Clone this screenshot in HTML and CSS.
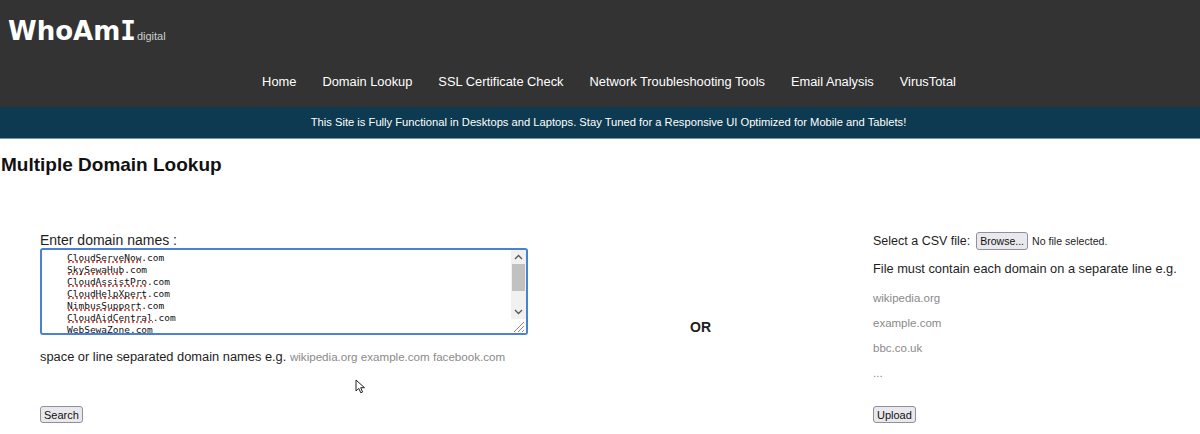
FILE: index.html
```html
<!DOCTYPE html>
<html lang="en">
<head>
  <meta charset="UTF-8" />
  <meta name="viewport" content="width=device-width, initial-scale=1.0"/>
  <title>WhoAmI digital - Multiple Domain Lookup</title>
  <link rel="stylesheet" href="styles.css">
</head>
<body>

<header class="site-header">
  <div class="logo">WhoAm<span class="logo-i">I</span><span class="logo-sub">digital</span></div>
  <nav class="nav">
    <a href="#">Home</a>
    <a href="#">Domain Lookup</a>
    <a href="#">SSL Certificate Check</a>
    <a href="#">Network Troubleshooting Tools</a>
    <a href="#">Email Analysis</a>
    <a href="#">VirusTotal</a>
  </nav>
</header>

<div class="banner">This Site is Fully Functional in Desktops and Laptops. Stay Tuned for a Responsive UI Optimized for Mobile and Tablets!</div>

<h1 class="page-title">Multiple Domain Lookup</h1>

<main class="lookup">
  <section class="col-left">
    <label class="field-label">Enter domain names :</label>
    <div class="textarea">
      <div class="textarea-text">
        <div class="line"><span class="typo">CloudServeNow</span>.com</div>
        <div class="line"><span class="typo">SkySewaHub</span>.com</div>
        <div class="line"><span class="typo">CloudAssistPro</span>.com</div>
        <div class="line"><span class="typo">CloudHelpXpert</span>.com</div>
        <div class="line"><span class="typo">NimbusSupport</span>.com</div>
        <div class="line"><span class="typo">CloudAidCentral</span>.com</div>
        <div class="line"><span class="typo">WebSewaZone</span>.com</div>
      </div>
      <div class="scrollbar">
        <svg class="arrow" width="15" height="14" viewBox="0 0 15 14"><path d="M4 9 L7.5 5.5 L11 9" fill="none" stroke="#555" stroke-width="1.3"/></svg>
        <div class="track"><div class="thumb"></div></div>
        <svg class="arrow" width="15" height="14" viewBox="0 0 15 14"><path d="M4 5 L7.5 8.5 L11 5" fill="none" stroke="#555" stroke-width="1.3"/></svg>
        <svg class="grip" width="15" height="14" viewBox="0 0 15 14"><path d="M13 3 L3 13 M13 7 L7 13 M13 11 L11 13" stroke="#888" stroke-width="1"/></svg>
      </div>
    </div>
    <p class="hint">space or line separated domain names e.g. <span class="muted">wikipedia.org example.com facebook.com</span></p>
    <button class="btn">Search</button>
    <svg class="cursor" width="11" height="15" viewBox="0 0 11 15"><path d="M1 1 L1 12 L3.8 9.4 L5.8 13.8 L7.6 13 L5.7 8.7 L9.5 8.7 Z" fill="#fff" stroke="#222" stroke-width="1"/></svg>
  </section>

  <section class="col-mid">
    <div class="or">OR</div>
  </section>

  <section class="col-right">
    <div class="file-row">
      <span>Select a CSV file:</span>
      <button class="btn btn-small">Browse...</button>
      <span class="file-name">No file selected.</span>
    </div>
    <p class="file-note">File must contain each domain on a separate line e.g.</p>
    <p class="example first">wikipedia.org</p>
    <p class="example">example.com</p>
    <p class="example">bbc.co.uk</p>
    <p class="example">...</p>
    <button class="btn btn-upload">Upload</button>
  </section>
</main>

</body>
</html>
```

FILE: styles.css
```css
body {
  margin: 0;
  font-family: 'Liberation Sans', Arial, sans-serif;
  color: #1e1e1e;
  background: #fff;
}
.site-header {
  background: #333333;
  padding: 16px 0 17px;
}
.logo {
  padding-left: 8px;
  font-family: 'DejaVu Sans', Verdana, sans-serif;
  font-weight: bold;
  font-size: 26px;
  line-height: 30px;
  color: #fff;
}
.logo-i {
  font-family: 'DejaVu Sans Mono', monospace;
}
.logo-sub {
  font-family: 'Liberation Sans', Arial, sans-serif;
  font-weight: normal;
  font-size: 11px;
  color: #cfcfcf;
  margin-left: 1px;
}
.nav {
  display: flex;
  justify-content: center;
  gap: 26px;
  margin-top: 23px;
  padding-left: 18px;
}
.nav a {
  color: #fff;
  text-decoration: none;
  font-size: 12.85px;
  line-height: 16px;
}
.banner {
  background: #0d3a51;
  border-bottom: 1px solid #6f98aa;
  padding-left: 17px;
  color: #fff;
  font-size: 11.2px;
  line-height: 31px;
  text-align: center;
}
.page-title {
  margin: 15px 0 0;
  padding-left: 1px;
  font-size: 19px;
  line-height: 22px;
  color: #111;
}
.lookup {
  display: grid;
  grid-template-columns: 488px 345px 1fr;
  padding-left: 40px;
  margin-top: 56px;
}
.col-left {
  position: relative;
}
.field-label {
  display: block;
  font-size: 14px;
  line-height: 16px;
}
.textarea {
  display: flex;
  height: 83px;
  border: 2px solid #4b82cf;
  border-radius: 3px;
  background: #fff;
}
.textarea-text {
  flex: 1;
  overflow: hidden;
  padding: 2px 0 0 25px;
  font-family: 'DejaVu Sans Mono', monospace;
  font-size: 9.5px;
  line-height: 12px;
  color: #111;
}
.typo {
  background-image:
    linear-gradient(45deg, transparent 42%, rgba(226, 70, 60, 0.85) 42% 58%, transparent 58%),
    linear-gradient(-45deg, transparent 42%, rgba(226, 70, 60, 0.85) 42% 58%, transparent 58%);
  background-size: 4px 2px;
  background-repeat: repeat-x;
  background-position: 0 100%;
}
.scrollbar {
  width: 15px;
  display: flex;
  flex-direction: column;
  background: #f1f1f1;
}
.arrow {
  display: block;
  flex: none;
}
.thumb {
  height: 27px;
  margin: 0 1px;
  background: #c1c1c1;
}
.track {
  flex: 1;
}
.grip {
  display: block;
  flex: none;
  background: #fff;
}
.hint {
  margin: 14px 0 0;
  font-size: 12.85px;
  line-height: 16px;
}
.muted {
  color: #8a8a8a;
  font-size: 11.6px;
}
.btn {
  display: block;
  margin-top: 41px;
  padding: 0 3px;
  height: 17px;
  font-family: 'Liberation Sans', Arial, sans-serif;
  font-size: 11px;
  color: #111;
  background: #e9e9ed;
  border: 1px solid #8f8f9d;
  border-radius: 3px;
}
.cursor {
  position: absolute;
  left: 315px;
  top: 147px;
}
.or {
  padding-top: 87px;
  text-align: center;
  font-weight: bold;
  font-size: 14px;
  line-height: 16px;
}
.file-row {
  display: flex;
  align-items: center;
  height: 18px;
  font-size: 12.5px;
}
.btn-small {
  display: inline-block;
  margin: 0 4px 0 6px;
  height: 18px;
  font-size: 10.5px;
}
.file-name {
  font-size: 10.6px;
}
.file-note {
  margin: 11px 0 0;
  font-size: 12.8px;
  line-height: 16px;
}
.example {
  margin: 9px 0 0;
  font-size: 11.5px;
  line-height: 16px;
  color: #8a8a8a;
}
.example.first {
  margin-top: 13px;
}
.btn-upload {
  margin-top: 25px;
}
```
